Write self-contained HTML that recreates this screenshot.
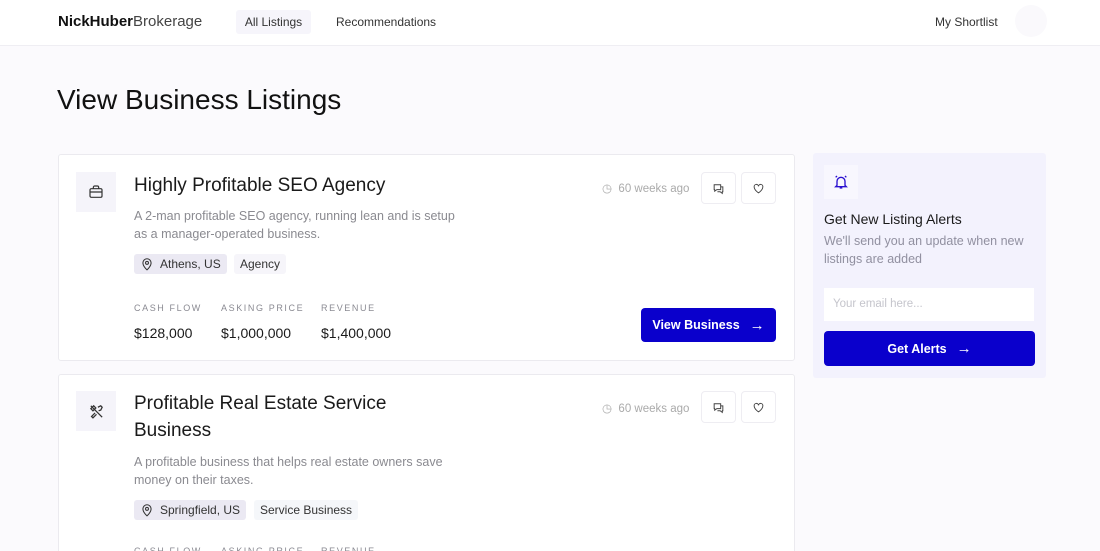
<!DOCTYPE html>
<html style="overflow:hidden;height:551px"><head><meta charset="utf-8"><style>
*{margin:0;padding:0;box-sizing:border-box}
body{width:1100px;height:551px;overflow:hidden;background:#fbfafd;font-family:"Liberation Sans",sans-serif;color:#111;position:relative}
.a{position:absolute}
.hdr{left:0;top:0;width:1100px;height:46px;background:#fff;border-bottom:1px solid #efeef3}
.card{background:#fff;border:1px solid #ebeaef;border-radius:3px}
.ib{background:#f5f4fa;width:40px;height:40px;display:flex;align-items:center;justify-content:center}
.t{font-size:19px;color:#1a1a1a;line-height:27px}
.d{font-size:12.5px;color:#8a8a90;line-height:18px}
.tag{font-size:12px;height:20px;line-height:20px;padding:0 6px;border-radius:3px;color:#333}
.lbl{font-size:9px;letter-spacing:1.6px;color:#8a8a92}
.val{font-size:14px;color:#1a1a1a}
.sq{width:35px;height:32px;border:1px solid #eeedf2;border-radius:4px;display:flex;align-items:center;justify-content:center;background:#fff}
.btn{background:#0a00cc;color:#fff;font-weight:bold;font-size:12.5px;border-radius:4px;display:flex;align-items:center;justify-content:center;gap:10px}
</style></head><body>
<div class="a hdr"></div>
<div class="a" style="left:58px;top:13px;font-size:15px"><b>NickHuber</b><span style="color:#444">Brokerage</span></div>
<div class="a" style="left:236px;top:10px;width:75px;height:24px;background:#f6f5fb;border-radius:3px;font-size:12px;line-height:24px;text-align:center;color:#333">All Listings</div>
<div class="a" style="left:336px;top:15px;font-size:12px;color:#333">Recommendations</div>
<div class="a" style="left:935px;top:15px;font-size:12px;color:#333">My Shortlist</div>
<div class="a" style="left:1015px;top:5px;width:32px;height:32px;border-radius:50%;background:#faf9fc"></div>
<div class="a" style="left:57px;top:84px;font-size:28px;color:#111">View Business Listings</div>

<div class="a card" style="left:58px;top:154px;width:737px;height:207px"></div>
<div class="a ib" style="left:76px;top:172px"><svg width="16" height="16" viewBox="0 0 24 24" fill="none" stroke="#333" stroke-width="1.8"><rect x="3" y="7" width="18" height="13" rx="2"/><path d="M8 7V5a2 2 0 0 1 2-2h4a2 2 0 0 1 2 2v2M3 12h18"/></svg></div>
<div class="a t" style="left:134px;top:172px">Highly Profitable SEO Agency</div>
<div class="a d" style="left:134px;top:207px;width:330px">A 2-man profitable SEO agency, running lean and is setup as a manager-operated business.</div>
<div class="a tag" style="left:134px;top:254px;background:#ebe9f3;padding-left:26px">Athens, US</div>
<svg class="a" style="left:140px;top:257px" width="14" height="14" viewBox="0 0 24 24" fill="none" stroke="#333" stroke-width="1.8"><path d="M12 22s7-6 7-12a7 7 0 0 0-14 0c0 6 7 12 7 12z"/><circle cx="12" cy="10" r="2.5"/></svg>
<div class="a tag" style="left:234px;top:254px;background:#f6f5fa">Agency</div>
<div class="a lbl" style="left:134px;top:303px">CASH FLOW</div>
<div class="a lbl" style="left:221px;top:303px">ASKING PRICE</div>
<div class="a lbl" style="left:321px;top:303px">REVENUE</div>
<div class="a val" style="left:134px;top:325px">$128,000</div>
<div class="a val" style="left:221px;top:325px">$1,000,000</div>
<div class="a val" style="left:321px;top:325px">$1,400,000</div>
<div class="a" style="left:602px;top:181px;font-size:11.5px;color:#aaa">◷ &nbsp;60 weeks ago</div>
<div class="a sq" style="left:701px;top:172px"><svg width="13" height="13" viewBox="0 0 24 24" fill="none" stroke="#444" stroke-width="1.8"><path d="M4 5h12v9H9l-4 3v-3H4z M16 9h4v9h-1v3l-4-3h-5"/></svg></div>
<div class="a sq" style="left:741px;top:172px"><svg width="13" height="13" viewBox="0 0 24 24" fill="none" stroke="#444" stroke-width="1.8"><path d="M12 20s-8-5-8-11a4 4 0 0 1 8-1 4 4 0 0 1 8 1c0 6-8 11-8 11z"/></svg></div>
<div class="a btn" style="left:641px;top:308px;width:135px;height:34px">View Business <span style="font-weight:normal;font-size:15px">→</span></div>

<div class="a card" style="left:58px;top:374px;width:737px;height:200px"></div>
<div class="a ib" style="left:76px;top:391px"><svg width="17" height="17" viewBox="0 0 24 24" fill="none" stroke="#333" stroke-width="1.8"><path d="M4 4l16 16M14 6l4-2 2 2-2 4-3 1M10 14l-5 5 2 2 5-5M4 8l4-4 3 3-4 4z"/></svg></div>
<div class="a t" style="left:134px;top:390px;width:300px">Profitable Real Estate Service Business</div>
<div class="a d" style="left:134px;top:453px;width:320px">A profitable business that helps real estate owners save money on their taxes.</div>
<div class="a tag" style="left:134px;top:500px;background:#ebe9f3;padding-left:26px">Springfield, US</div>
<svg class="a" style="left:140px;top:503px" width="14" height="14" viewBox="0 0 24 24" fill="none" stroke="#333" stroke-width="1.8"><path d="M12 22s7-6 7-12a7 7 0 0 0-14 0c0 6 7 12 7 12z"/><circle cx="12" cy="10" r="2.5"/></svg>
<div class="a tag" style="left:254px;top:500px;background:#f5f7fa">Service Business</div>
<div class="a lbl" style="left:134px;top:546px">CASH FLOW</div>
<div class="a lbl" style="left:221px;top:546px">ASKING PRICE</div>
<div class="a lbl" style="left:321px;top:546px">REVENUE</div>
<div class="a" style="left:602px;top:401px;font-size:11.5px;color:#aaa">◷ &nbsp;60 weeks ago</div>
<div class="a sq" style="left:701px;top:391px"><svg width="13" height="13" viewBox="0 0 24 24" fill="none" stroke="#444" stroke-width="1.8"><path d="M4 5h12v9H9l-4 3v-3H4z M16 9h4v9h-1v3l-4-3h-5"/></svg></div>
<div class="a sq" style="left:741px;top:391px"><svg width="13" height="13" viewBox="0 0 24 24" fill="none" stroke="#444" stroke-width="1.8"><path d="M12 20s-8-5-8-11a4 4 0 0 1 8-1 4 4 0 0 1 8 1c0 6-8 11-8 11z"/></svg></div>

<div class="a" style="left:813px;top:153px;width:233px;height:225px;background:#f3f2fd;border-radius:3px"></div>
<div class="a" style="left:824px;top:165px;width:34px;height:34px;background:#f8f7fe;display:flex;align-items:center;justify-content:center"><svg width="16" height="16" viewBox="0 0 24 24" fill="none" stroke="#2a10d0" stroke-width="2"><path d="M6 17V11a6 6 0 0 1 12 0v6l2 2H4zM10 21h4M4 5l2-2M20 5l-2-2"/></svg></div>
<div class="a" style="left:824px;top:211px;font-size:14px;color:#1a1a1a">Get New Listing Alerts</div>
<div class="a d" style="left:824px;top:232px;width:200px;color:#9190a0">We'll send you an update when new listings are added</div>
<div class="a" style="left:824px;top:288px;width:210px;height:33px;background:#fff;font-size:11.5px;color:#c5c5cc;padding:10px 9px">Your email here...</div>
<div class="a btn" style="left:824px;top:331px;width:211px;height:35px">Get Alerts <span style="font-weight:normal;font-size:15px">→</span></div>
</body></html>
